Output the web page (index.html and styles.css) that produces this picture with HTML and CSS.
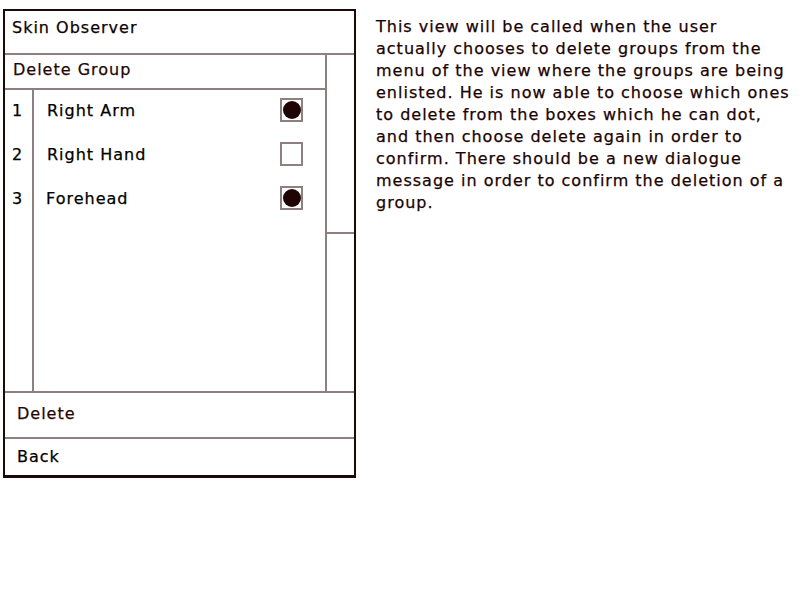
FILE: index.html
```html
<!DOCTYPE html>
<html>
<head>
<meta charset="utf-8">
<link rel="stylesheet" href="styles.css">
</head>
<body>
<div class="page">
  <div class="phone">
    <div class="header">Skin Observer</div>
    <div class="body">
      <div class="main">
        <div class="title">Delete Group</div>
        <div class="list">
          <div class="nums">
            <div class="num">1</div>
            <div class="num">2</div>
            <div class="num">3</div>
          </div>
          <div class="items">
            <div class="item"><span class="name">Right Arm</span><span class="box checked"></span></div>
            <div class="item"><span class="name">Right Hand</span><span class="box"></span></div>
            <div class="item"><span class="name name-fore">Forehead</span><span class="box checked"></span></div>
          </div>
        </div>
      </div>
      <div class="side"><div class="side-top"></div></div>
    </div>
    <div class="btn btn-delete">Delete</div>
    <div class="btn btn-back">Back</div>
  </div>
  <div class="note">This view will be called when the user<br>actually chooses to delete groups from the<br>menu of the view where the groups are being<br>enlisted. He is now able to choose which ones<br>to delete from the boxes which he can dot,<br>and then choose delete again in order to<br>confirm. There should be a new dialogue<br>message in order to confirm the deletion of a<br>group.</div>
</div>
</body>
</html>
```

FILE: styles.css
```css
html, body {
  margin: 0;
  padding: 0;
  background: #ffffff;
}
body {
  font-family: "DejaVu Sans", sans-serif;
  font-size: 16px;
  letter-spacing: 1px;
  color: #1a0202;
  -webkit-text-stroke: 0.25px currentColor;
}
.page {
  display: flex;
  align-items: flex-start;
  padding: 9px 0 0 3px;
}
.phone {
  width: 349px;
  border-style: solid;
  border-color: #1e0808;
  border-width: 2px 2px 3px 2px;
  display: flex;
  flex-direction: column;
}
.header {
  height: 35px;
  padding: 7px 0 0 7px;
  line-height: 20px;
  border-bottom: 2px solid #8e8080;
  color: #0e0202;
}
.body {
  display: flex;
  height: 336px;
  border-bottom: 2px solid #8e8080;
}
.main {
  width: 320px;
  display: flex;
  flex-direction: column;
}
.title {
  height: 28px;
  padding: 5px 0 0 8px;
  line-height: 20px;
  border-bottom: 2px solid #8e8080;
  color: #240606;
}
.list {
  flex: 1;
  display: flex;
}
.nums {
  width: 27px;
  padding-top: 1px;
  border-right: 2px solid #8e8080;
  display: flex;
  flex-direction: column;
  gap: 4px;
}
.num {
  height: 40px;
  line-height: 20px;
  padding-left: 7px;
  display: flex;
  align-items: center;
  color: #000;
}
.items {
  flex: 1;
  padding-top: 1px;
  display: flex;
  flex-direction: column;
  gap: 4px;
}
.item {
  height: 40px;
  display: flex;
  align-items: center;
  justify-content: space-between;
  padding: 0 22px 0 13px;
  line-height: 20px;
  color: #000;
}
.name-fore {
  margin-left: -1px;
}
.box {
  width: 19px;
  height: 20px;
  border: 2px solid #8e8080;
  display: flex;
  align-items: center;
  justify-content: center;
  margin-top: -3px;
}
.box.checked::after {
  content: "";
  width: 18px;
  height: 18px;
  border-radius: 50%;
  background: #1e0404;
}
.side {
  width: 27px;
  border-left: 2px solid #8e8080;
}
.side-top {
  height: 177px;
  border-bottom: 2px solid #8e8080;
}
.btn {
  line-height: 20px;
  padding-left: 12px;
}
.btn-delete {
  height: 33px;
  padding-top: 11px;
  border-bottom: 2px solid #8e8080;
  color: #240606;
}
.btn-back {
  height: 28px;
  padding-top: 8px;
  color: #000;
}
.note {
  margin: 7px 0 0 20px;
  line-height: 22px;
  white-space: nowrap;
  color: #1a0202;
}
```
